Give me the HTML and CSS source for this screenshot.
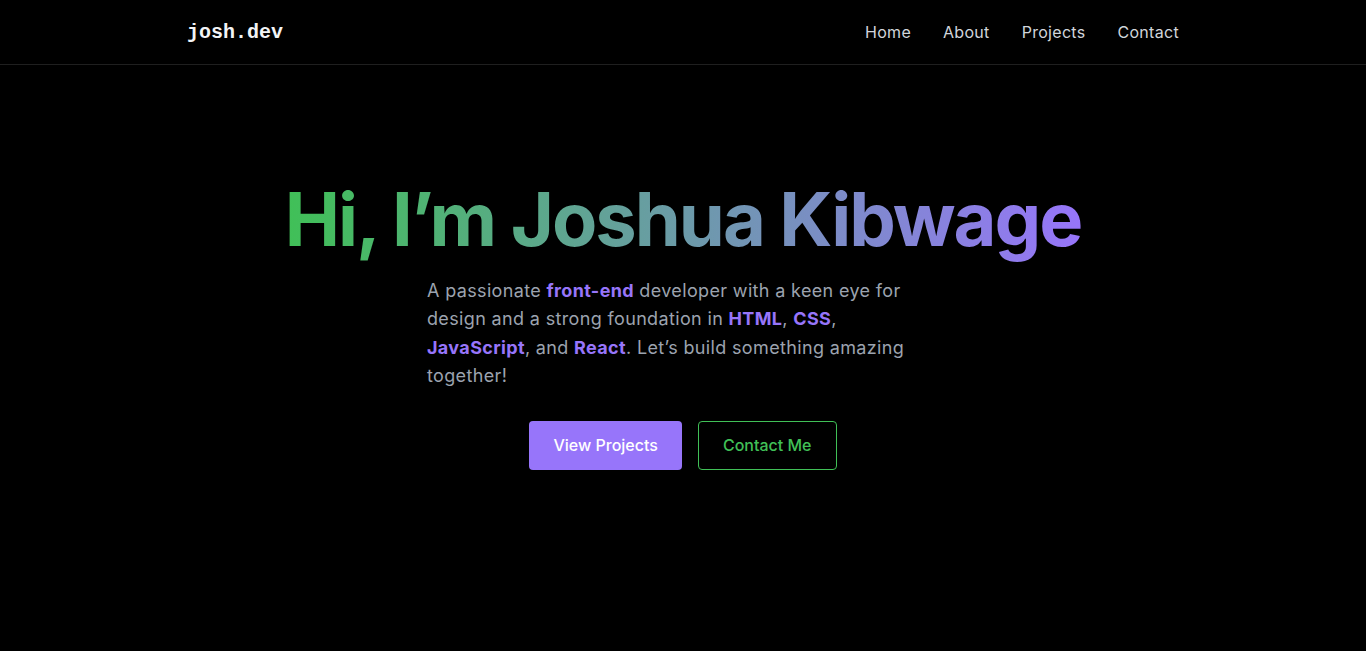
FILE: index.html
```html
<!DOCTYPE html>
<html lang="en">
<head>
<meta charset="utf-8">
<title>josh.dev</title>
<link rel="stylesheet" href="styles.css">
</head>
<body>
<header class="site-header">
  <div class="container nav">
    <a class="logo" href="#">josh.dev</a>
    <nav class="nav-links">
      <a href="#">Home</a>
      <a href="#">About</a>
      <a href="#">Projects</a>
      <a href="#">Contact</a>
    </nav>
  </div>
</header>
<main class="hero">
  <h1 class="hero-title">Hi, I’m Joshua Kibwage</h1>
  <p class="hero-text">A passionate <strong>front-end</strong> developer with a keen eye for design and a strong foundation in <strong>HTML</strong>, <strong>CSS</strong>, <strong>JavaScript</strong>, and <strong>React</strong>. Let’s build something amazing together!</p>
  <div class="hero-actions">
    <a class="btn btn-primary" href="#">View Projects</a>
    <a class="btn btn-outline" href="#">Contact Me</a>
  </div>
</main>
</body>
</html>
```
FILE: styles.css
```css
* { box-sizing: border-box; }
html, body { margin: 0; padding: 0; background: #000; }
body {
  font-family: "Inter", "Open Sans", sans-serif;
  color: #d1d5db;
  min-height: 100vh;
}
a { text-decoration: none; }
.site-header {
  border-bottom: 1px solid #1f1f1f;
}
.container {
  max-width: 992px;
  margin: 0 auto;
}
.nav {
  height: 64px;
  display: flex;
  align-items: center;
  justify-content: space-between;
}
.logo {
  font-family: "Liberation Mono", monospace;
  font-weight: 700;
  font-size: 20px;
  color: #f3f4f6;
}
.nav-links {
  display: flex;
  gap: 32px;
}
.nav-links a {
  color: #d1d5db;
  font-size: 16px;
  letter-spacing: 0.3px;
}
.hero {
  display: flex;
  flex-direction: column;
  align-items: center;
  padding-top: 110px;
}
.hero-title {
  margin: 0;
  font-size: 74px;
  font-weight: 700;
  line-height: 1.2;
  letter-spacing: -2px;
  background: linear-gradient(90deg, #40c057 0%, #9775fa 100%);
  -webkit-background-clip: text;
  background-clip: text;
  color: transparent;
}
.hero-text {
  max-width: 512px;
  margin: 13px 0 0;
  font-size: 18px;
  line-height: 28.5px;
  letter-spacing: 0.35px;
  color: #9ca3af;
}
.hero-text strong {
  color: #9775fa;
  font-weight: 700;
}
.hero-actions {
  display: flex;
  gap: 16px;
  margin-top: 30px;
}
.btn {
  display: inline-flex;
  align-items: center;
  justify-content: center;
  height: 49px;
  padding: 0 24px;
  border-radius: 4px;
  font-size: 16px;
  font-weight: 500;
}
.btn-primary {
  background: #9775fa;
  color: #fff;
}
.btn-outline {
  border: 1px solid #40c057;
  color: #40c057;
}
```
